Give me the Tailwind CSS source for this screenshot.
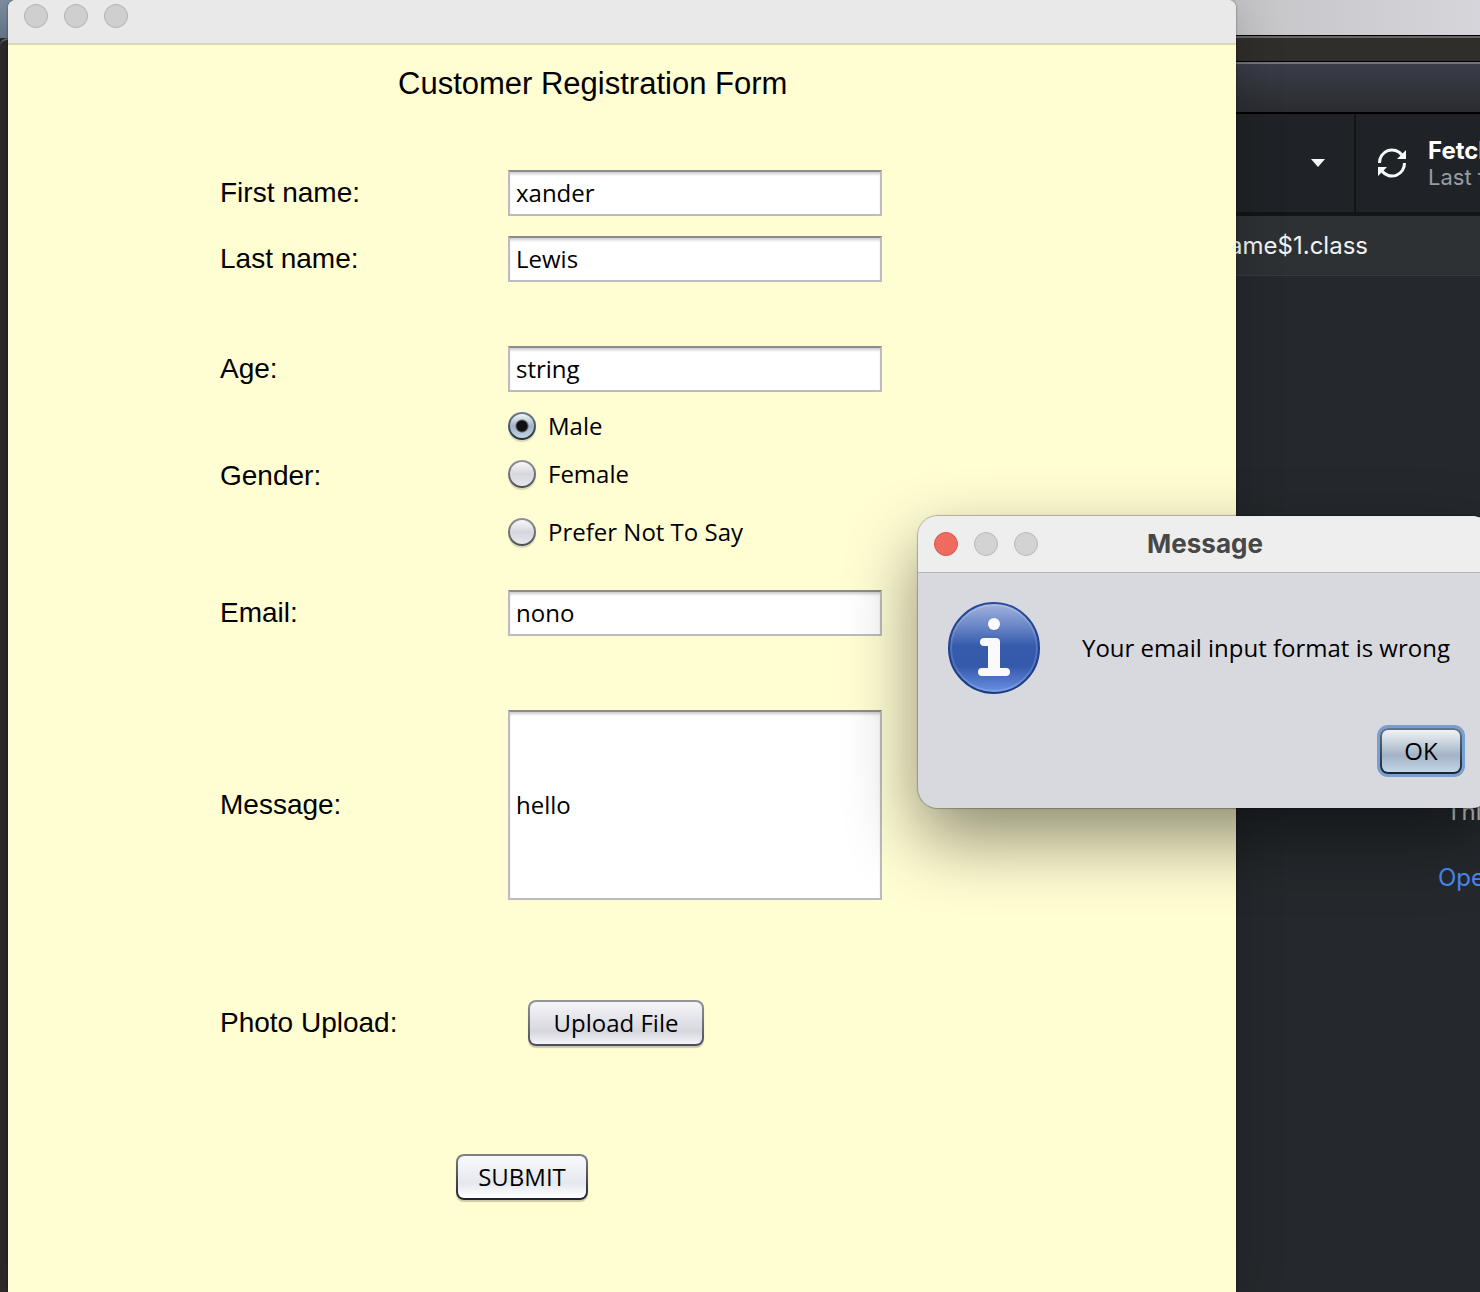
<!DOCTYPE html>
<html lang="en">
<head>
<meta charset="utf-8">
<title>Customer Registration Form</title>
<script src="https://cdn.jsdelivr.net/npm/@tailwindcss/browser@4"></script>
</head>
<body class="bg-[#25292d]">
<div class="relative flex min-h-screen overflow-hidden font-['Open_Sans',sans-serif] text-[24px] leading-8 text-black">

  <!-- Desktop edge left of the form window -->
  <div class="w-2 shrink-0 bg-[#2f2c2b]">
    <div class="h-[38px] w-4 bg-linear-to-b from-[#7f8fa3] to-[#6b7b90]"></div>
    <div class="h-4 rounded-tl-lg border-t-2 border-[#6a6a68]"></div>
  </div>

  <!-- Form window -->
  <main class="relative z-10 min-w-0 flex-1 rounded-t-lg bg-[#fffdd2] shadow-[0_0_2px_rgba(0,0,0,0.6),0_10px_50px_rgba(0,0,0,0.2)]">
    <div class="flex h-[45px] items-start gap-4 rounded-t-lg border-b-2 border-[#dcd9b0] bg-[#e9e9e9] px-4 pt-1">
      <span class="size-6 rounded-full border border-[#b1b1b1] bg-[#cfcfcf]"></span>
      <span class="size-6 rounded-full border border-[#b1b1b1] bg-[#cfcfcf]"></span>
      <span class="size-6 rounded-full border border-[#b1b1b1] bg-[#cfcfcf]"></span>
    </div>

    <form class="flex flex-col pt-5 pb-10">
      <h1 class="pl-[390px] font-['Liberation_Sans',sans-serif] text-[31px] leading-[38px]">Customer Registration Form</h1>

      <div class="grid grid-cols-[288px_374px] items-center pt-[67px] pl-[212px]">
        <label for="first" class="font-['Liberation_Sans',sans-serif] text-[28px]">First name:</label>
        <input id="first" type="text" value="xander" class="h-[46px] w-full border-2 border-[#bcbcc0] border-t-[#8c8c90] bg-white px-1.5 pb-0.5 inset-shadow-[0_3px_3px_-1px_rgba(0,0,0,0.2)] outline-none">

        <label for="last" class="mt-5 font-['Liberation_Sans',sans-serif] text-[28px]">Last name:</label>
        <input id="last" type="text" value="Lewis" class="mt-5 h-[46px] w-full border-2 border-[#bcbcc0] border-t-[#8c8c90] bg-white px-1.5 pb-0.5 inset-shadow-[0_3px_3px_-1px_rgba(0,0,0,0.2)] outline-none">

        <label for="age" class="mt-16 font-['Liberation_Sans',sans-serif] text-[28px]">Age:</label>
        <input id="age" type="text" value="string" class="mt-16 h-[46px] w-full border-2 border-[#bcbcc0] border-t-[#8c8c90] bg-white px-1.5 pb-0.5 inset-shadow-[0_3px_3px_-1px_rgba(0,0,0,0.2)] outline-none">

        <span id="gender" class="mt-3 font-['Liberation_Sans',sans-serif] text-[28px]">Gender:</span>
        <div role="radiogroup" aria-labelledby="gender" class="mt-[18px] flex flex-col">
          <label class="flex h-8 items-center gap-3"><input type="radio" name="gender" checked class="size-7 appearance-none rounded-full border-2 border-transparent [background:radial-gradient(circle,#111_5px,transparent_7px)_padding-box,linear-gradient(#f2f5f8,#a3b3c4_50%,#c3d3e4)_padding-box,linear-gradient(#6f7f92,#1f2f42)_border-box] shadow-[0_2px_1px_rgba(0,0,0,0.15)]">Male</label>
          <label class="mt-4 flex h-8 items-center gap-3"><input type="radio" name="gender" class="size-7 appearance-none rounded-full border-2 border-transparent [background:linear-gradient(#f8f8fa,#d6d7dd_50%,#e6e7ed)_padding-box,linear-gradient(#94959c,#4c4d56)_border-box] shadow-[0_2px_1px_rgba(0,0,0,0.15)]">Female</label>
          <label class="mt-[26px] flex h-8 items-center gap-3"><input type="radio" name="gender" class="size-7 appearance-none rounded-full border-2 border-transparent [background:linear-gradient(#f8f8fa,#d6d7dd_50%,#e6e7ed)_padding-box,linear-gradient(#94959c,#4c4d56)_border-box] shadow-[0_2px_1px_rgba(0,0,0,0.15)]">Prefer Not To Say</label>
        </div>

        <label for="email" class="mt-[42px] font-['Liberation_Sans',sans-serif] text-[28px]">Email:</label>
        <input id="email" type="text" value="nono" class="mt-[42px] h-[46px] w-full border-2 border-[#bcbcc0] border-t-[#8c8c90] bg-white px-1.5 pb-0.5 inset-shadow-[0_3px_3px_-1px_rgba(0,0,0,0.2)] outline-none">

        <label for="message" class="mt-[74px] font-['Liberation_Sans',sans-serif] text-[28px]">Message:</label>
        <input id="message" type="text" value="hello" class="mt-[74px] h-[190px] w-full border-2 border-[#bcbcc0] border-t-[#8c8c90] bg-white px-1.5 pb-0.5 inset-shadow-[0_3px_3px_-1px_rgba(0,0,0,0.2)] outline-none">

        <span class="mt-[100px] font-['Liberation_Sans',sans-serif] text-[28px]">Photo Upload:</span>
        <div class="mt-[100px] flex pl-5">
          <button type="button" class="h-[46px] w-44 rounded-lg border-2 border-transparent [background:linear-gradient(#f6f6f8,#d6d7de_70%,#f4f4fa)_padding-box,linear-gradient(#94959c,#4c4d5c)_border-box] shadow-[0_2px_1px_rgba(0,0,0,0.2)]">Upload File</button>
        </div>
      </div>

      <div class="flex pt-[108px] pl-[448px]">
        <button type="submit" class="h-[46px] w-[132px] rounded-lg border-2 border-transparent [background:linear-gradient(#f8f9fb,#e6e8ef_65%,#ffffff)_padding-box,linear-gradient(#808189,#1f2030)_border-box] shadow-[0_2px_1px_rgba(0,0,0,0.2)]">SUBMIT</button>
      </div>
    </form>
  </main>

  <!-- Background application -->
  <aside class="w-[244px] shrink-0 font-[Inter,sans-serif] whitespace-nowrap text-white">
    <div class="-ml-2 h-[35px] bg-linear-to-r from-[#c4c4c7] to-[#d6d5db]"></div>
    <div class="h-[26px] border-t border-black bg-[#302e2b] inset-shadow-[0_2px_0_#666664]"></div>
    <div class="h-[53px] border-t border-b-2 border-black bg-linear-to-b from-[#3b3e48] to-[#2b2c31] inset-shadow-[0_2px_0_#72747b]"></div>
    <div class="flex h-[102px] border-b-4 border-[#141414] bg-[#1f2226]">
      <div class="flex w-[120px] shrink-0 items-center justify-end border-r-2 border-[#141414] pr-7">
        <svg class="h-2 w-4" viewBox="0 0 16 8" fill="#f8f9fa"><path d="M1 0h14L8 8z"/></svg>
      </div>
      <div class="flex shrink-0 items-center gap-5 pl-5">
        <svg class="size-8" viewBox="0 0 32 32" fill="none" stroke="#f8f9fa" stroke-width="3"><path d="M3.500 16A12.500 12.500 0 0 1 26 8M28.500 16A12.500 12.500 0 0 1 6 24"/><path d="M30 3v9h-9zM2 29v-9h9z" fill="#f8f9fa" stroke="none"/></svg>
        <div class="pt-0.5 text-[24px] leading-[26px]"><div class="font-bold">Fetch</div><div class="text-[22px] text-[#959da5]">Last f</div></div>
      </div>
    </div>
    <div class="flex h-[60px] items-center justify-end border-b border-[#353a3e] bg-[#2d3134] pr-28 text-[24px] text-[#f0f2f4]">Frame$1.class</div>
    <p class="pt-[520px] pl-[210px] text-[#c8cacc]">This</p>
    <a href="#" class="mt-[34px] block pl-[202px] text-[#4a8bf0]">Open</a>
  </aside>

  <!-- Message dialog -->
  <section role="dialog" aria-labelledby="dlg" class="absolute top-[516px] -right-3 z-20 w-[574px] rounded-[20px] bg-[#d8d9df] shadow-[0_0_1px_1px_rgba(0,0,0,0.25),0_30px_70px_rgba(0,0,0,0.45)]">
    <header class="relative flex h-[57px] items-center gap-4 rounded-t-[20px] border-b border-[#b2b3b8] bg-[#eeeeee] px-4">
      <span class="size-6 rounded-full border border-[#d9574a] bg-[#ed6b5f]"></span>
      <span class="size-6 rounded-full border border-[#b9b9b9] bg-[#d3d3d3]"></span>
      <span class="size-6 rounded-full border border-[#b9b9b9] bg-[#d3d3d3]"></span>
      <h2 id="dlg" class="flex-1 pr-[120px] text-center font-[Inter,sans-serif] text-[26px] font-bold text-[#474747]">Message</h2>
    </header>
    <div class="flex items-center pt-[29px] pl-[30px]">
      <svg class="size-[92px] shrink-0" viewBox="0 0 92 92"><defs><linearGradient id="g" x1="0" y1="0" x2="0" y2="1"><stop offset="0" stop-color="#a3b4de"/><stop offset=".28" stop-color="#6482c4"/><stop offset=".48" stop-color="#365bac"/><stop offset=".7" stop-color="#3559ab"/><stop offset="1" stop-color="#6a92e6"/></linearGradient><linearGradient id="r" x1="0" y1="0" x2="0" y2="1"><stop offset="0" stop-color="#274c9e"/><stop offset="1" stop-color="#1c3a80"/></linearGradient></defs><circle cx="46" cy="46" r="45" fill="url(#g)" stroke="url(#r)" stroke-width="2"/><circle cx="46" cy="46" r="43" fill="none" stroke="#ffffff" stroke-opacity=".15" stroke-width="2"/><g fill="#fafafa"><circle cx="46" cy="22" r="6"/><path d="M36 36h12a4 4 0 0 1 4 4v26h6a4 4 0 0 1 0 8H34a4 4 0 0 1 0-8h6V44h-4a4 4 0 0 1 0-8z"/></g></svg>
      <p class="pl-[42px] whitespace-nowrap">Your email input format is wrong</p>
    </div>
    <div class="flex justify-end pt-[34px] pr-[30px] pb-[34px]">
      <button type="button" class="h-[46px] w-[82px] rounded-lg border-2 border-transparent [background:linear-gradient(#f0f3f6,#a3b3c5_60%,#c3d5e8)_padding-box,linear-gradient(#66768a,#162334)_border-box] shadow-[0_0_0_3px_#76a0cf]">OK</button>
    </div>
  </section>
</div>
</body>
</html>
